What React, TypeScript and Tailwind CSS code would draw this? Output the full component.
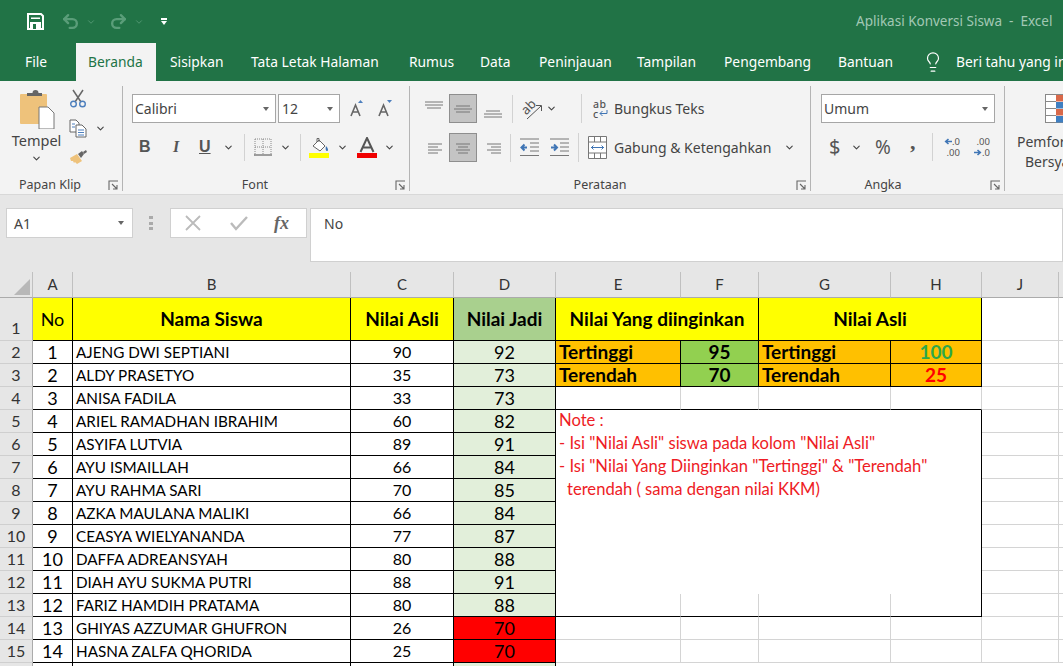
import React from "react";
import { ChevronDown, Undo2, Redo2, Lightbulb } from "lucide-react";

const tabs = [
  { label: "Sisipkan", w: "w-[81px]" },
  { label: "Tata Letak Halaman", w: "w-[158px]" },
  { label: "Rumus", w: "w-[71px]" },
  { label: "Data", w: "w-[59px]" },
  { label: "Peninjauan", w: "w-[98px]" },
  { label: "Tampilan", w: "w-[87px]" },
  { label: "Pengembang", w: "w-[114px]" },
  { label: "Bantuan", w: "w-[88px]" },
];

const students = [
  ["AJENG DWI SEPTIANI", 90, 92],
  ["ALDY PRASETYO", 35, 73],
  ["ANISA FADILA", 33, 73],
  ["ARIEL RAMADHAN IBRAHIM", 60, 82],
  ["ASYIFA LUTVIA", 89, 91],
  ["AYU ISMAILLAH", 66, 84],
  ["AYU RAHMA SARI", 70, 85],
  ["AZKA MAULANA MALIKI", 66, 84],
  ["CEASYA WIELYANANDA", 77, 87],
  ["DAFFA ADREANSYAH", 80, 88],
  ["DIAH AYU SUKMA PUTRI", 88, 91],
  ["FARIZ HAMDIH PRATAMA", 80, 88],
  ["GHIYAS AZZUMAR GHUFRON", 26, 70],
  ["HASNA ZALFA QHORIDA", 25, 70],
] as const;

const ui = "font-['Noto_Sans',sans-serif]";
const sheet = "font-['Lato',sans-serif]";
const black = "border-r border-b border-black";
const light = "border-r border-b border-[#d4d4d4]";
const boxEdge = "border-r border-b border-r-[#d4d4d4] border-b-black";

function Chev({ className = "" }: { className?: string }) {
  return <ChevronDown size={11} strokeWidth={2.4} className={"shrink-0 text-[#444] " + className} />;
}

function Launcher() {
  return (
    <svg width="11" height="11" viewBox="0 0 11 11" className="shrink-0 ml-auto">
      <path d="M1 10V1h9M4 4l5 5M9 5v4H5" fill="none" stroke="#666" strokeWidth="1.1" />
    </svg>
  );
}

function Sep({ className = "" }: { className?: string }) {
  return <div className={"w-px bg-[#d2d2d2] shrink-0 " + className} />;
}

function Drop() {
  return <div className="w-0 h-0 border-x-[3.5px] border-x-transparent border-t-[4px] border-t-[#666] shrink-0" />;
}

// horizontal lines, used for all the alignment buttons
function Lines({ rows }: { rows: number[][] }) {
  return (
    <svg width="20" height="20" viewBox="0 0 20 20" className="shrink-0">
      {rows.map((r, i) => (
        <path key={i} d={`M${r[0]} ${r[2]}H${r[1]}`} stroke="#777" strokeWidth="1" />
      ))}
    </svg>
  );
}

function Selected({ children }: { children: React.ReactNode }) {
  return (
    <div className="w-[28px] h-[29px] flex items-center justify-center bg-[#c4c4c4] border border-[#8e8e8e] shrink-0">
      {children}
    </div>
  );
}

function PasteIcon() {
  return (
    <svg width="36" height="40" viewBox="0 0 36 40" className="shrink-0">
      <rect x="1" y="5" width="27" height="30" fill="#eec27b" rx="1" />
      <path d="M8 6V4h5.500a3 3 0 0 1 6 0H23v3H8z" fill="#666" />
      <path d="M20 18h9l6 6v16H20z" fill="#fff" stroke="#777" />
    </svg>
  );
}

function ScissorsIcon() {
  return (
    <svg width="18" height="19" viewBox="0 0 18 19" className="shrink-0">
      <path d="M4 1l8 12M14 1L6 13" stroke="#666" strokeWidth="1.500" fill="none" />
      <circle cx="4.500" cy="15" r="2.800" fill="none" stroke="#4d7fbd" strokeWidth="1.400" />
      <circle cx="13.500" cy="15" r="2.800" fill="none" stroke="#4d7fbd" strokeWidth="1.400" />
    </svg>
  );
}

function CopyIcon() {
  return (
    <svg width="18" height="19" viewBox="0 0 18 19" className="shrink-0">
      <path d="M1 1h6l3 3v9H1z" fill="#fff" stroke="#666" />
      <path d="M7 6h6l4 4v8H7z" fill="#fff" stroke="#666" />
      <path d="M3 5h3M3 8h3M9 11h6M9 13.500h6M9 16h6" stroke="#4d7fbd" />
    </svg>
  );
}

function BrushIcon() {
  return (
    <svg width="19" height="17" viewBox="0 0 19 17" className="shrink-0">
      <path d="M1 9l7-4 5 7-5 3-2-2-1 1-1-2-2 0z" fill="#eec27b" />
      <path d="M9 5l4-3 2 3-3 4z" fill="#666" />
      <path d="M14 3l3-2 1 2-3 2z" fill="#666" />
    </svg>
  );
}

function FontSizeIcon({ up }: { up: boolean }) {
  return (
    <svg width="16" height="17" viewBox="0 0 16 17" className="shrink-0">
      <path d="M2 16L6.500 5 11 16M3.800 12h5.400" fill="none" stroke="#666" strokeWidth="1.600" />
      {up ? <path d="M9 3l2.500-3L14 3z" fill="#4d7fbd" /> : <path d="M10 0h5l-2.500 3z" fill="#4d7fbd" />}
    </svg>
  );
}

function BorderIcon() {
  return (
    <svg width="18" height="18" viewBox="0 0 18 18" className="shrink-0">
      <path d="M1 1h16M1 9h16M1 1v16M9 1v16M17 1v16" stroke="#888" strokeDasharray="1 1" fill="none" />
      <path d="M0 17h18" stroke="#777" strokeWidth="1.400" />
    </svg>
  );
}

function FillIcon() {
  return (
    <svg width="21" height="21" viewBox="0 0 21 21" className="shrink-0">
      <path d="M4 9l6-6 6 6-5 5z" fill="#fff" stroke="#666" />
      <path d="M8 5V1.500h2V5" fill="none" stroke="#666" />
      <path d="M17 9c2 2 2.500 4 1.500 5-1 .5-2.500-.5-1.500-5z" fill="#3f75b5" />
      <rect x="0" y="16" width="20" height="5" fill="#ffff00" />
    </svg>
  );
}

function FontColorIcon() {
  return (
    <svg width="20" height="21" viewBox="0 0 20 21" className="shrink-0">
      <path d="M3.500 15L10 1l6.500 14M6 10.500h8" fill="none" stroke="#555" strokeWidth="2" />
      <rect x="0" y="16" width="20" height="5" fill="#f00000" />
    </svg>
  );
}

function OrientationIcon() {
  return (
    <svg width="22" height="22" viewBox="0 0 22 22" className="shrink-0">
      <text x="0" y="13" transform="rotate(-45 8 9)" fontSize="13" fill="#555" fontFamily="Noto Sans">ab</text>
      <path d="M6 21L20 8M15 7.500h5.500V13" stroke="#555" fill="none" />
    </svg>
  );
}

function IndentIcon({ inc }: { inc: boolean }) {
  return (
    <svg width="20" height="19" viewBox="0 0 20 19" className="shrink-0">
      <path d={inc ? "M1 9.500h5M4 6.500l3 3-3 3" : "M7 9.500H2M4.500 6.500l-3 3 3 3"} fill="none" stroke="#3f75b5" strokeWidth="2" />
      <path d="M0 1h19M10 5h9M10 9h9M10 13h9M0 17.500h19" stroke="#777" />
    </svg>
  );
}

function WrapIcon() {
  return (
    <div className="w-[17px] flex flex-col items-start leading-[10px] text-[10.500px] text-[#555] shrink-0">
      <span className="tracking-[0.5px] font-medium">ab</span>
      <span className="flex items-center font-medium">
        c
        <svg width="9" height="8" viewBox="0 0 9 8" className="ml-[1px]">
          <path d="M8 0v3.500H1M3.500 1L1 3.500 3.500 6" fill="none" stroke="#3f75b5" />
        </svg>
      </span>
    </div>
  );
}

function MergeIcon() {
  return (
    <svg width="19" height="23" viewBox="0 0 19 23" className="shrink-0">
      <path d="M.500.500h18v22H.500zM.500 6h18M.500 17h18M6.500.500V6M12.500.500V6M6.500 17v5.500M12.500 17v5.500" fill="#fff" stroke="#777" />
      <path d="M3 11.500h13M5.500 9.500l-2 2 2 2M13.500 9.500l2 2-2 2" fill="none" stroke="#3f75b5" />
    </svg>
  );
}

function DecArrow({ right }: { right: boolean }) {
  return (
    <svg width="8" height="7" viewBox="0 0 8 7" className="shrink-0">
      <path d={right ? "M0 3.500h6M3.500 1l2.800 2.500L3.500 6" : "M8 3.500H2M4.500 1L1.700 3.500 4.500 6"} fill="none" stroke="#3f75b5" strokeWidth="1.600" />
    </svg>
  );
}

function DecimalIcon({ inc }: { inc: boolean }) {
  return (
    <div className="w-[18px] flex flex-col text-[9.500px] leading-[11px] text-[#555] shrink-0">
      <span className="flex items-center justify-end">
        {inc ? null : <DecArrow right={false} />}
        {inc ? ".00" : ".0"}
      </span>
      <span className="flex items-center justify-end">
        {inc ? <DecArrow right /> : null}
        {inc ? ".0" : ".00"}
      </span>
    </div>
  );
}

function CondFormatIcon() {
  return (
    <svg width="36" height="30" viewBox="0 0 36 30" className="shrink-0">
      <rect x=".500" y=".500" width="35" height="28" fill="#fff" stroke="#888" />
      <rect x="11" y="1" width="16" height="6.500" fill="#d9694a" />
      <rect x="11" y="8" width="20" height="6.500" fill="#3f7fc1" />
      <rect x="11" y="15" width="14" height="6.500" fill="#d9694a" />
      <rect x="11" y="22" width="9" height="6.500" fill="#3f7fc1" />
      <path d="M1 7.500h10M1 14.500h10M1 21.500h10" stroke="#888" />
    </svg>
  );
}

function TitleBar() {
  return (
    <div className="h-[43px] flex items-center pl-[27px] shrink-0">
      <svg width="17" height="17" viewBox="0 0 17 17" className="shrink-0">
        <path d="M1 1h13l2 2v13H1z" fill="none" stroke="#fff" strokeWidth="2" />
        <rect x="3" y="9" width="11" height="7" fill="#fff" />
        <rect x="6" y="11" width="3" height="5" fill="#217346" />
        <rect x="4" y="4.500" width="9" height="1.500" fill="#fff" />
      </svg>
      <Undo2 size={19} strokeWidth={3} className="ml-[17px] text-[#5a9d79]" />
      <ChevronDown size={10} strokeWidth={2} className="ml-[6px] text-[#5a9d79]" />
      <Redo2 size={19} strokeWidth={3} className="ml-[13px] text-[#5a9d79]" />
      <ChevronDown size={10} strokeWidth={2} className="ml-[6px] text-[#5a9d79]" />
      <div className="ml-[17px] flex flex-col items-center gap-[1.5px]">
        <div className="w-[6px] h-[1.5px] bg-white" />
        <div className="w-0 h-0 border-x-[3.500px] border-x-transparent border-t-[4px] border-t-white" />
      </div>
      <div className={ui + " ml-auto text-[13.500px] text-[#a2c8b4] whitespace-pre shrink-0 w-[207px]"}>
        {"Aplikasi Konversi Siswa  -  Excel"}
      </div>
    </div>
  );
}

function TabBar() {
  return (
    <div className={ui + " h-[38px] flex items-stretch text-[13.800px] text-white pl-3 shrink-0 whitespace-nowrap overflow-hidden"}>
      <div className="w-[64px] pl-[13px] flex items-center shrink-0">File</div>
      <div className="w-[80px] pl-[12px] flex items-center bg-[#f3f3f3] text-[#217346] shrink-0">Beranda</div>
      {tabs.map((t) => (
        <div key={t.label} className={t.w + " pl-[14px] flex items-center shrink-0"}>
          {t.label}
        </div>
      ))}
      <Lightbulb size={22} strokeWidth={1.300} className="ml-[10px] self-center shrink-0" />
      <div className="ml-[12px] flex items-center shrink-0">Beri tahu yang in</div>
    </div>
  );
}

function GroupLabel({ label, w }: { label: string; w: string }) {
  return (
    <div className="mt-auto flex items-center h-[12px] text-[12.500px] text-[#444] pr-[3px] shrink-0">
      <span className={w + " text-center shrink-0"}>{label}</span>
      <Launcher />
    </div>
  );
}

function ClipboardGroup() {
  return (
    <div className="w-[123px] shrink-0 border-r border-[#b4b4b4] flex flex-col h-[105px]">
      <div className="flex h-[86px]">
        <div className="w-[49px] ml-[12px] flex flex-col items-center pt-[3px] shrink-0">
          <PasteIcon />
          <span className="text-[14.500px] text-[#444] leading-[20px] mt-[1px]">Tempel</span>
          <Chev className="mt-[3px]" />
        </div>
        <div className="ml-[8px] flex flex-col pt-[3px]">
          <ScissorsIcon />
          <div className="flex items-center mt-[11px]">
            <CopyIcon />
            <Chev className="ml-[8px]" />
          </div>
          <div className="mt-[11px]">
            <BrushIcon />
          </div>
        </div>
      </div>
      <GroupLabel label="Papan Klip" w="w-[100px]" />
    </div>
  );
}

function FontGroup() {
  return (
    <div className="w-[287px] shrink-0 border-r border-[#b4b4b4] flex flex-col h-[105px] pl-[9px]">
      <div className="flex items-center h-[29px] mt-[8px]">
        <div className="w-[144px] h-[29px] bg-white border border-[#a6a6a6] flex items-center pl-[2px] pr-[6px] text-[14px] text-[#444]">
          <span className="flex-1">Calibri</span>
          <Drop />
        </div>
        <div className="w-[62px] h-[29px] ml-[2px] bg-white border border-[#a6a6a6] flex items-center pl-[3px] pr-[6px] text-[14px] text-[#444]">
          <span className="flex-1">12</span>
          <Drop />
        </div>
        <div className="ml-[9px]"><FontSizeIcon up /></div>
        <div className="ml-[12px]"><FontSizeIcon up={false} /></div>
      </div>
      <div className="flex items-center h-[28px] mt-[10px] text-[#555] text-[16px] leading-none">
        <span className="ml-[7px] w-[12px] font-bold font-['Liberation_Sans',sans-serif]">B</span>
        <span className="ml-[22px] w-[12px] italic font-bold font-['Liberation_Serif',serif]">I</span>
        <span className="ml-[14px] w-[14px] font-bold underline font-['Liberation_Sans',sans-serif]">U</span>
        <Chev className="ml-[10px]" />
        <Sep className="h-[27px] ml-[10px]" />
        <div className="ml-[9px]"><BorderIcon /></div>
        <Chev className="ml-[8px]" />
        <Sep className="h-[27px] ml-[9px]" />
        <div className="ml-[8px]"><FillIcon /></div>
        <Chev className="ml-[7px]" />
        <div className="ml-[9px]"><FontColorIcon /></div>
        <Chev className="ml-[7px]" />
      </div>
      <GroupLabel label="Font" w="w-[246px]" />
    </div>
  );
}

function AlignGroup() {
  return (
    <div className="w-[401px] shrink-0 border-r border-[#b4b4b4] flex flex-col h-[105px]">
      <div className="flex items-center h-[29px] mt-[8px] pl-[14px]">
        <div className="-mt-[4px]"><Lines rows={[[1, 19, 5], [1, 19, 8], [3, 17, 11]]} /></div>
        <div className="ml-[5px]">
          <Selected><Lines rows={[[3, 17, 7], [1, 19, 10], [3, 17, 13]]} /></Selected>
        </div>
        <div className="ml-[6px] mt-[2px]"><Lines rows={[[3, 17, 11], [1, 19, 14], [1, 19, 17]]} /></div>
        <Sep className="h-[28px] ml-[9px]" />
        <div className="ml-[8px]"><OrientationIcon /></div>
        <Chev className="ml-[3px]" />
        <Sep className="h-[29px] ml-[24px]" />
        <div className="ml-[11px]"><WrapIcon /></div>
        <span className="ml-[4px] text-[14px] text-[#444]">Bungkus Teks</span>
      </div>
      <div className="flex items-center h-[29px] mt-[10px] pl-[16px]">
        <Lines rows={[[2, 16, 6], [2, 12, 9], [2, 16, 12], [2, 12, 15]]} />
        <div className="ml-[3px]">
          <Selected><Lines rows={[[3, 17, 6], [5, 15, 9], [3, 17, 12], [5, 15, 15]]} /></Selected>
        </div>
        <div className="ml-[8px]"><Lines rows={[[2, 16, 6], [6, 16, 9], [2, 16, 12], [6, 16, 15]]} /></div>
        <Sep className="h-[28px] ml-[5px]" />
        <div className="ml-[9px]"><IndentIcon inc={false} /></div>
        <div className="ml-[10px]"><IndentIcon inc /></div>
        <Sep className="h-[29px] ml-[8px]" />
        <div className="ml-[9px]"><MergeIcon /></div>
        <span className="ml-[7px] text-[14px] text-[#444]">Gabung &amp; Ketengahkan</span>
        <Chev className="ml-[13px]" />
      </div>
      <GroupLabel label="Perataan" w="w-[380px]" />
    </div>
  );
}

function NumberGroup() {
  return (
    <div className="w-[194px] shrink-0 border-r border-[#b4b4b4] flex flex-col h-[105px] pl-[10px]">
      <div className="w-[174px] h-[29px] mt-[8px] bg-white border border-[#a6a6a6] flex items-center pl-[2px] pr-[6px] text-[14px] text-[#444] shrink-0">
        <span className="flex-1">Umum</span>
        <Drop />
      </div>
      <div className="flex items-center h-[28px] mt-[10px] text-[#555]">
        <span className="ml-[8px] w-[12px] text-[20px] leading-none">$</span>
        <Chev className="ml-[10px]" />
        <span className="ml-[13px] w-[19px] text-[19px] leading-none">%</span>
        <span className="ml-[16px] w-[8px] text-[22px] font-bold leading-none font-['Liberation_Serif',serif] -mt-[10px]">,</span>
        <Sep className="h-[28px] ml-[14px]" />
        <div className="ml-[9px]"><DecimalIcon inc={false} /></div>
        <div className="ml-[12px]"><DecimalIcon inc /></div>
      </div>
      <GroupLabel label="Angka" w="w-[124px]" />
    </div>
  );
}

function Ribbon() {
  return (
    <div className={ui + " h-[114px] bg-[#f3f3f3] border-b border-[#d8d8d8] pt-[5px] flex items-start shrink-0 overflow-hidden"}>
      <ClipboardGroup />
      <FontGroup />
      <AlignGroup />
      <NumberGroup />
      <div className="ml-[12px] w-[100px] shrink-0 flex flex-col items-start">
        <div className="ml-[28px] mt-[8px]"><CondFormatIcon /></div>
        <div className="text-[14px] text-[#444] leading-[20px] mt-[8px] whitespace-nowrap">Pemformatan</div>
        <div className="text-[14px] text-[#444] leading-[20px] ml-[8px] whitespace-nowrap">Bersyarat</div>
      </div>
    </div>
  );
}

function FormulaBar() {
  return (
    <div className={ui + " h-[77px] flex items-start pt-[13px] shrink-0 text-[14px] text-[#444]"}>
      <div className="ml-[6px] w-[127px] h-[30px] bg-white border border-[#d0d0d0] flex items-center pl-[7px] pr-[8px]">
        <span className="flex-1">A1</span>
        <Drop />
      </div>
      <div className="ml-[16px] w-[4px] h-[14px] mt-[8px] flex flex-col justify-between">
        <div className="h-[3px] bg-[#aaa]" />
        <div className="h-[3px] bg-[#aaa]" />
        <div className="h-[3px] bg-[#aaa]" />
      </div>
      <div className="ml-[17px] w-[137px] h-[30px] bg-white border border-[#d0d0d0] flex items-center text-[#aaa] shrink-0">
        <svg width="16" height="16" viewBox="0 0 16 16" className="ml-[14px]">
          <path d="M1 1l14 14M15 1L1 15" stroke="#bbb" strokeWidth="1.800" />
        </svg>
        <svg width="18" height="16" viewBox="0 0 18 16" className="ml-[29px]">
          <path d="M1 8l5 6L17 2" fill="none" stroke="#bbb" strokeWidth="2.400" />
        </svg>
        <span className="ml-[26px] italic font-bold text-[18px] text-[#666] font-['Liberation_Serif',serif]">
          fx
        </span>
      </div>
      <div className="ml-[3px] flex-1 h-[54px] bg-white border border-[#d0d0d0] pl-[13px] pt-[4px]">No</div>
    </div>
  );
}

function ColHead({ label }: { label: string }) {
  return (
    <div className="bg-[#e6e6e6] border-r border-b border-r-[#c0c0c0] border-b-[#ababab] flex items-center justify-center text-[15px] text-[#333]">
      {label}
    </div>
  );
}

function RowHead({ n, align = "items-center" }: { n: number; align?: string }) {
  return (
    <div className={"bg-[#e6e6e6] border-r border-b border-r-[#ababab] border-b-[#cfcfcf] flex justify-center text-[16px] text-[#333] " + align}>
      {n}
    </div>
  );
}

function Summary({ label, wanted, actual, color }: { label: string; wanted: number; actual: number; color: string }) {
  const cell = black + " bg-[#ffc000] flex items-center font-bold text-[19px]";
  return (
    <>
      <div className={cell + " pl-[3px]"}>{label}</div>
      <div className={black + " bg-[#92d050] flex items-center justify-center font-bold text-[19px]"}>{wanted}</div>
      <div className={cell + " pl-[3px]"}>{label}</div>
      <div className={cell + " justify-center " + color}>{actual}</div>
    </>
  );
}

function Sheet() {
  const head = black + " flex items-center justify-center text-[19px] font-bold";
  return (
    <div className={sheet + " flex-1 bg-white grid grid-cols-[33px_40px_278px_103px_102px_125px_78px_132px_91px_77px_5px] grid-rows-[26px_43px_repeat(15,23px)] text-black overflow-hidden"}>
      {/* column headers */}
      <div className="bg-[#e6e6e6] border-r border-b border-r-[#c0c0c0] border-b-[#ababab] flex items-end justify-end pr-[2px] pb-[2px]">
        <div className="w-0 h-0 border-l-[16px] border-l-transparent border-b-[16px] border-b-[#b8b8b8]" />
      </div>
      {["A", "B", "C", "D", "E", "F", "G", "H", "J", ""].map((c, i) => (
        <ColHead key={i} label={c} />
      ))}

      {/* row 1 */}
      <RowHead n={1} align="items-end" />
      <div className={black + " bg-[#ffff00] flex items-center justify-center text-[18px]"}>No</div>
      <div className={head + " bg-[#ffff00]"}>Nama Siswa</div>
      <div className={head + " bg-[#ffff00]"}>Nilai Asli</div>
      <div className={head + " bg-[#a9d08e]"}>Nilai Jadi</div>
      <div className={head + " col-span-2 bg-[#ffff00]"}>Nilai Yang diinginkan</div>
      <div className={head + " col-span-2 bg-[#ffff00]"}>Nilai Asli</div>
      <div className={light} />
      <div className={light} />

      {students.map((s, i) => {
        const row = i + 2;
        const low = s[2] === 70;
        return (
          <React.Fragment key={s[0]}>
            <RowHead n={row} />
            <div className={black + " flex items-center justify-center text-[18px]"}>{i + 1}</div>
            <div className={black + " flex items-center pl-[3px] text-[15.250px] whitespace-nowrap overflow-hidden"}>{s[0]}</div>
            <div className={black + " flex items-center justify-center text-[16px]"}>{s[1]}</div>
            <div className={black + " flex items-center justify-center text-[18px] " + (low ? "bg-[#ff0000]" : "bg-[#e2efda]")}>{s[2]}</div>

            {row === 2 && <Summary label="Tertinggi" wanted={95} actual={100} color="text-[#2ea84a]" />}
            {row === 3 && <Summary label="Terendah" wanted={70} actual={25} color="text-[#ff0000]" />}
            {row === 4 && (
              <>
                <div className={boxEdge} />
                <div className={boxEdge} />
                <div className={boxEdge} />
                <div className={boxEdge} />
              </>
            )}
            {row === 5 && (
              <div className="col-span-4 row-span-8 border-r border-black pl-[3px] text-[16.600px] leading-[23px] text-[#ee1c25] bg-white whitespace-nowrap">
                <div className="-mt-[1px]">Note :</div>
                <div>- Isi "Nilai Asli" siswa pada kolom "Nilai Asli"</div>
                <div>- Isi "Nilai Yang Diinginkan "Tertinggi" &amp; "Terendah"</div>
                <div className="pl-[8px]">terendah ( sama dengan nilai KKM)</div>
              </div>
            )}
            {row === 13 && (
              <>
                <div className={boxEdge} />
                <div className={boxEdge} />
                <div className={boxEdge} />
                <div className={black} />
              </>
            )}
            {row > 13 && (
              <>
                <div className={light} />
                <div className={light} />
                <div className={light} />
                <div className={light} />
              </>
            )}
            <div className={light} />
            <div className={light} />
          </React.Fragment>
        );
      })}

      {/* row 16 is cut off by the bottom of the window */}
      <RowHead n={16} align="items-start" />
      <div className={black} />
      <div className={black} />
      <div className={black} />
      <div className={black + " bg-[#e2efda]"} />
    </div>
  );
}

export default function App() {
  return (
    <div className="w-[1063px] h-[666px] overflow-hidden bg-[#e6e6e6] flex flex-col">
      <div className="bg-[#217346] shrink-0 flex flex-col">
        <TitleBar />
        <TabBar />
      </div>
      <Ribbon />
      <FormulaBar />
      <Sheet />
    </div>
  );
}
